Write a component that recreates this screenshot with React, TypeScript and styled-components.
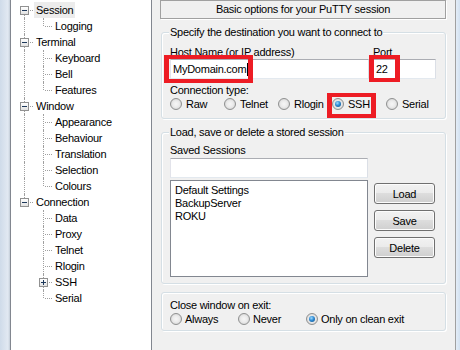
import React from 'react';
import styled, { createGlobalStyle, css } from 'styled-components';

const GlobalStyle = createGlobalStyle`
  html, body { margin: 0; padding: 0; }
  body {
    width: 460px; height: 350px; overflow: hidden; background: #f0f0f0;
    font-family: "Liberation Sans", Arial, sans-serif; font-size: 11px;
    letter-spacing: -0.25px; color: #000;
  }
  * { box-sizing: border-box; }
`;

const Window = styled.div`
  position: relative;
  display: flex;
  width: 460px;
  height: 350px;
  overflow: hidden;
  background: #f0f0f0;
`;

const Frame = styled.div<{ $w: number; $side: 'left' | 'right' }>`
  flex: 0 0 ${p => p.$w}px;
  background: ${p =>
    p.$side === 'left'
      ? 'linear-gradient(90deg, #cfdbe9 0%, #e2e9f2 80%, #c3cdd8 100%)'
      : 'linear-gradient(90deg, #e4edf7, #d3e1f0)'};
`;

/* ---------- Tree ---------- */
const TreePanel = styled.div`
  flex: 0 0 142px;
  background: #fff;
  border-left: 1px solid #828790;
  border-right: 1px solid #828790;
  padding: 2px 0 0 4px;
`;

const TreeRow = styled.div`
  display: flex;
  align-items: flex-start;
  height: 16px;
`;

type VLine = 'none' | 'full' | 'top' | 'bottom';

const Guide = styled.span<{ $v: VLine; $h?: boolean }>`
  position: relative;
  flex: 0 0 19px;
  height: 16px;
  padding: 4px 0 0 5px;
  &::before {
    content: '';
    position: absolute;
    left: 9px;
    width: 0;
    border-left: 1px dotted #a0a0a0;
    top: ${p => (p.$v === 'bottom' ? '9px' : '0')};
    bottom: ${p => (p.$v === 'top' ? '8px' : '0')};
    display: ${p => (p.$v === 'none' ? 'none' : 'block')};
  }
  &::after {
    content: '';
    position: absolute;
    left: 11px;
    right: 1px;
    top: 8px;
    border-top: 1px dotted #a0a0a0;
    display: ${p => (p.$h ? 'block' : 'none')};
  }
`;

const Expander = styled.span<{ $plus?: boolean }>`
  position: relative;
  z-index: 1;
  display: block;
  width: 9px;
  height: 9px;
  border: 1px solid #919191;
  background: linear-gradient(#ffffff, #e2e2e2);
  &::before {
    content: '';
    position: absolute;
    left: 1px;
    top: 3px;
    width: 5px;
    height: 1px;
    background: #1e395b;
  }
  &::after {
    content: '';
    position: absolute;
    left: 3px;
    top: 1px;
    width: 1px;
    height: 5px;
    background: #1e395b;
    display: ${p => (p.$plus ? 'block' : 'none')};
  }
`;

const NodeLabel = styled.span<{ $selected?: boolean }>`
  height: 16px;
  line-height: 16px;
  padding: 0 2px;
  white-space: nowrap;
  background: ${p => (p.$selected ? '#ececec' : 'transparent')};
`;

/* ---------- Right side ---------- */
const Main = styled.div`
  flex: 1;
  display: flex;
  flex-direction: column;
  padding-left: 8px;
  border-right: 1px solid #a0a0a0;
`;

const Header = styled.div`
  width: 286px;
  height: 19px;
  border: 1px solid #a0a0a0;
  box-shadow: 1px 1px 0 #fff;
  display: flex;
  align-items: center;
  justify-content: center;
  line-height: 13px;
`;

const GroupBox = styled.div<{ $mt: number; $pad: string }>`
  position: relative;
  width: 285px;
  margin: ${p => p.$mt}px 0 0 1px;
  padding: ${p => p.$pad};
  border: 1px solid #d5dfe5;
  border-radius: 3px;
  box-shadow: inset 1px 1px 0 #fff, 1px 1px 0 #fff;
`;

const Legend = styled.span`
  position: absolute;
  top: -7px;
  left: 7px;
  padding: 0 1px;
  line-height: 13px;
  background: #f0f0f0;
  white-space: nowrap;
`;

const Label = styled.div<{ $mt?: number; $indent?: number }>`
  line-height: 13px;
  height: 13px;
  margin-top: ${p => p.$mt ?? 0}px;
  padding-left: ${p => p.$indent ?? 0}px;
  white-space: nowrap;
`;

const FieldRow = styled.div`
  display: flex;
  gap: 3px;
`;

const Field = styled.div`
  display: flex;
  flex-direction: column;
`;

const TextBox = styled.div<{ $w: number; $mt?: number; $pl?: number }>`
  width: ${p => p.$w}px;
  height: 20px;
  margin-top: ${p => p.$mt ?? 0}px;
  padding-left: ${p => p.$pl ?? 2}px;
  background: #fff;
  border: 1px solid;
  border-color: #abadb3 #dbdfe6 #e3e9ef #e2e3ea;
  display: flex;
  align-items: center;
  line-height: 13px;
  white-space: nowrap;
`;

const Caret = styled.span`
  display: inline-block;
  width: 1px;
  height: 13px;
  margin-left: 1px;
  background: #000;
`;

const RadioRow = styled.div<{ $col: number; $n: number }>`
  display: grid;
  grid-template-columns: repeat(${p => p.$n}, ${p => p.$col}px);
  height: 14px;
`;

const RadioItem = styled.label<{ $gap?: number }>`
  display: flex;
  align-items: center;
  gap: ${p => p.$gap ?? 4}px;
  height: 14px;
  line-height: 13px;
  white-space: nowrap;
`;

const RadioCircle = styled.span<{ $checked?: boolean }>`
  position: relative;
  flex: 0 0 12px;
  width: 12px;
  height: 12px;
  border-radius: 50%;
  border: 1px solid #8f9090;
  background: radial-gradient(circle at 50% 50%, #f6f6f6 0%, #ebebeb 45%, #c9c9c9 100%);
  ${p =>
    p.$checked &&
    css`
      &::after {
        content: '';
        position: absolute;
        left: 2px;
        top: 2px;
        width: 6px;
        height: 6px;
        border-radius: 50%;
        background: radial-gradient(circle at 40% 35%, #9fdcff 0%, #2e8ad4 45%, #0d4b80 100%);
      }
    `}
`;

const ListRow = styled.div`
  display: flex;
  gap: 6px;
  margin-top: 2px;
`;

const ListBox = styled.div`
  width: 198px;
  height: 97px;
  background: #fff;
  border: 1px solid #828790;
  padding: 3px 4px;
  line-height: 13px;
`;

const ButtonCol = styled.div`
  display: flex;
  flex-direction: column;
  gap: 6px;
  padding-top: 3px;
`;

const Button = styled.button`
  width: 61px;
  height: 21px;
  padding: 0;
  border: 1px solid #707070;
  border-radius: 3px;
  background: linear-gradient(#f2f2f2 0%, #ebebeb 49%, #dddddd 50%, #cfcfcf 100%);
  box-shadow: inset 0 0 0 1px #fcfcfc;
  font: inherit;
  letter-spacing: inherit;
  color: #000;
`;

const Annotation = styled.div<{ $x: number; $y: number; $w: number; $h: number }>`
  position: absolute;
  left: ${p => p.$x}px;
  top: ${p => p.$y}px;
  width: ${p => p.$w}px;
  height: ${p => p.$h}px;
  border-style: solid;
  border-color: #ed1c24;
  border-width: 4px 5px;
  pointer-events: none;
`;

/* ---------- Data ---------- */
type Child = { label: string; collapsed?: boolean };
type Node = { label: string; selected?: boolean; children: Child[] };

const tree: Node[] = [
  { label: 'Session', selected: true, children: [{ label: 'Logging' }] },
  { label: 'Terminal', children: [{ label: 'Keyboard' }, { label: 'Bell' }, { label: 'Features' }] },
  {
    label: 'Window',
    children: [
      { label: 'Appearance' },
      { label: 'Behaviour' },
      { label: 'Translation' },
      { label: 'Selection' },
      { label: 'Colours' },
    ],
  },
  {
    label: 'Connection',
    children: [
      { label: 'Data' },
      { label: 'Proxy' },
      { label: 'Telnet' },
      { label: 'Rlogin' },
      { label: 'SSH', collapsed: true },
      { label: 'Serial' },
    ],
  },
];

const connTypes = ['Raw', 'Telnet', 'Rlogin', 'SSH', 'Serial'];
const exitOpts = ['Always', 'Never', 'Only on clean exit'];

function Tree() {
  const rows: React.ReactNode[] = [];
  tree.forEach((node, i) => {
    const lastRoot = i === tree.length - 1;
    const v: VLine = i === 0 ? 'bottom' : lastRoot ? 'top' : 'full';
    rows.push(
      <TreeRow key={node.label}>
        <Guide $v={v} $h>
          <Expander />
        </Guide>
        <NodeLabel $selected={node.selected}>{node.label}</NodeLabel>
      </TreeRow>
    );
    node.children.forEach((c, j) => {
      const lastChild = j === node.children.length - 1;
      rows.push(
        <TreeRow key={node.label + c.label}>
          <Guide $v={lastRoot ? 'none' : 'full'} />
          <Guide $v={lastChild ? 'top' : 'full'} $h>
            {c.collapsed && <Expander $plus />}
          </Guide>
          <NodeLabel>{c.label}</NodeLabel>
        </TreeRow>
      );
    });
  });
  return <TreePanel>{rows}</TreePanel>;
}

export default function App() {
  return (
    <>
      <GlobalStyle />
      <Window>
        <Frame $w={10} $side="left" />
        <Tree />
        <Main>
          <Header>Basic options for your PuTTY session</Header>

          <GroupBox $mt={13} $pad="13px 8px 7px 8px">
            <Legend>Specify the destination you want to connect to</Legend>
            <FieldRow>
              <Field>
                <Label>Host Name (or IP address)</Label>
                <TextBox $w={199}>
                  MyDomain.com
                  <Caret />
                </TextBox>
              </Field>
              <Field>
                <Label $indent={1}>Port</Label>
                <TextBox $w={64} $pl={3}>22</TextBox>
              </Field>
            </FieldRow>
            <Label $mt={5}>Connection type:</Label>
            <RadioRow $col={54} $n={connTypes.length}>
              {connTypes.map(t => (
                <RadioItem key={t}>
                  <RadioCircle $checked={t === 'SSH'} />
                  {t}
                </RadioItem>
              ))}
            </RadioRow>
          </GroupBox>

          <GroupBox $mt={13} $pad="11px 8px 6px 8px">
            <Legend>Load, save or delete a stored session</Legend>
            <Label>Saved Sessions</Label>
            <TextBox $w={198} $mt={1} />
            <ListRow>
              <ListBox>
                <div>Default Settings</div>
                <div>BackupServer</div>
                <div>ROKU</div>
              </ListBox>
              <ButtonCol>
                <Button>Load</Button>
                <Button>Save</Button>
                <Button>Delete</Button>
              </ButtonCol>
            </ListRow>
          </GroupBox>

          <GroupBox $mt={8} $pad="6px 8px 4px 8px">
            <Label>Close window on exit:</Label>
            <RadioRow $col={68} $n={exitOpts.length}>
              {exitOpts.map(t => (
                <RadioItem key={t} $gap={3}>
                  <RadioCircle $checked={t === 'Only on clean exit'} />
                  {t}
                </RadioItem>
              ))}
            </RadioRow>
          </GroupBox>
        </Main>
        <Frame $w={4} $side="right" />

        <Annotation $x={164} $y={55} $w={89} $h={28} />
        <Annotation $x={369} $y={55} $w={31} $h={27} />
        <Annotation $x={327} $y={93} $w={49} $h={25} />
      </Window>
    </>
  );
}
